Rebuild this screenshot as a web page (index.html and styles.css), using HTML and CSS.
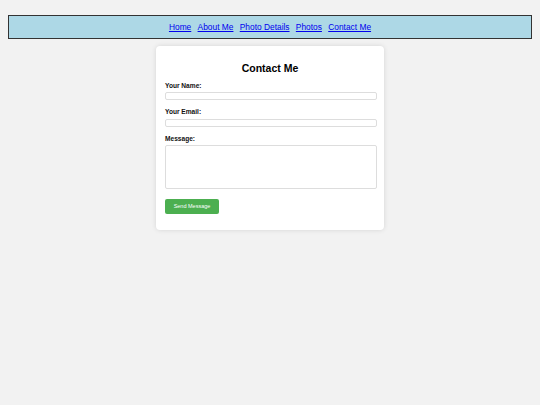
FILE: index.html
```html
<!DOCTYPE html>
<html>
<head>
<meta charset="utf-8">
<title>Contact Me</title>
<link rel="stylesheet" href="styles.css">
</head>
<body>
<nav class="nav">
  <a href="#">Home</a>
  <a href="#">About Me</a>
  <a href="#">Photo Details</a>
  <a href="#">Photos</a>
  <a href="#">Contact Me</a>
</nav>
<main class="card">
  <h1 class="title">Contact Me</h1>
  <form class="form">
    <label class="label" for="name">Your Name:</label>
    <input class="field" id="name" type="text">
    <label class="label" for="email">Your Email:</label>
    <input class="field" id="email" type="email">
    <label class="label" for="msg">Message:</label>
    <textarea class="field area" id="msg"></textarea>
    <button class="btn" type="button">Send Message</button>
  </form>
</main>
</body>
</html>
```
FILE: styles.css
```css
html, body {
  margin: 0;
  background: #f2f2f2;
}
body {
  padding: 15px 8px;
  font-family: "Liberation Sans", Arial, sans-serif;
}
.nav {
  display: flex;
  justify-content: center;
  align-items: center;
  gap: 6.3px;
  height: 22px;
  background: #add8e6;
  border: 1px solid #333;
  font-size: 8.4px;
}
.nav a {
  color: #0000ee;
  text-decoration: underline;
}
.card {
  box-sizing: border-box;
  width: 228px;
  margin: 7px auto 0;
  padding: 9px 9px 16px;
  background: #fff;
  border-radius: 4px;
  box-shadow: 0 0 5px rgba(0,0,0,0.12);
}
.title {
  margin: 7px 0 7.5px;
  font-size: 10.5px;
  line-height: 12px;
  text-align: center;
  font-weight: bold;
  color: #000;
}
.form {
  display: flex;
  flex-direction: column;
  align-items: flex-start;
}
.label {
  display: block;
  font-size: 6.6px;
  line-height: 8px;
  font-weight: bold;
  margin-bottom: 2.5px;
  color: #111;
}
.field {
  box-sizing: border-box;
  width: 212px;
  height: 8px;
  margin: 0 0 8px;
  padding: 0;
  border: 1px solid #ddd;
  border-radius: 2px;
  background: #fff;
  font-size: 6px;
}
.area {
  height: 43.5px;
  resize: none;
  margin-bottom: 10px;
}
.btn {
  width: 54px;
  height: 15px;
  padding: 0;
  border: none;
  border-radius: 2px;
  background: #4caf50;
  color: #fff;
  font-family: "Liberation Sans", Arial, sans-serif;
  font-size: 5.5px;
}
```
